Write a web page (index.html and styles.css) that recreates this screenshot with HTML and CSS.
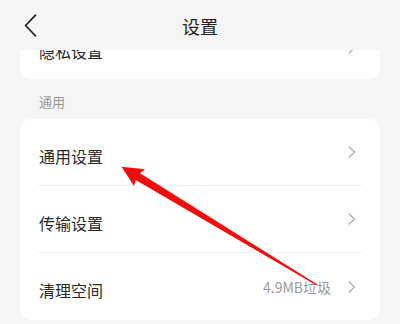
FILE: index.html
```html
<!DOCTYPE html>
<html lang="zh-CN">
<head>
<meta charset="utf-8">
<title>设置</title>
<link rel="stylesheet" href="styles.css">
</head>
<body>
<div class="page">
  <header class="topbar">
    <div class="back">
      <svg width="13" height="23" viewBox="0 0 13 23"><path d="M11.5 1.2 L1.6 11.5 L11.5 21.8" fill="none" stroke="#222" stroke-width="1.7" stroke-linecap="round" stroke-linejoin="round"/></svg>
    </div>
    <div class="title">设置</div>
    <div></div>
  </header>
  <main class="content">
    <section class="card card-top">
      <div class="row row-short">
        <span class="label">隐私设置</span>
        <span class="right"><svg class="chev" width="8" height="12" viewBox="0 0 8 12"><path d="M1.2 1 L6.4 6 L1.2 11" fill="none" stroke="#aaa" stroke-width="1.2" stroke-linecap="round" stroke-linejoin="round"/></svg></span>
      </div>
    </section>
    <div class="group-title">通用</div>
    <section class="card">
      <div class="row">
        <span class="label">通用设置</span>
        <span class="right"><svg class="chev" width="8" height="12" viewBox="0 0 8 12"><path d="M1.2 1 L6.4 6 L1.2 11" fill="none" stroke="#aaa" stroke-width="1.2" stroke-linecap="round" stroke-linejoin="round"/></svg></span>
      </div>
      <div class="row">
        <span class="label">传输设置</span>
        <span class="right"><svg class="chev" width="8" height="12" viewBox="0 0 8 12"><path d="M1.2 1 L6.4 6 L1.2 11" fill="none" stroke="#aaa" stroke-width="1.2" stroke-linecap="round" stroke-linejoin="round"/></svg></span>
      </div>
      <div class="row">
        <span class="label">清理空间</span>
        <span class="right"><span class="value">4.9MB垃圾</span><svg class="chev" width="8" height="12" viewBox="0 0 8 12"><path d="M1.2 1 L6.4 6 L1.2 11" fill="none" stroke="#aaa" stroke-width="1.2" stroke-linecap="round" stroke-linejoin="round"/></svg></span>
      </div>
    </section>
  </main>
  <svg class="annot" width="400" height="324" viewBox="0 0 400 324">
    <defs>
      <filter id="soft" x="-10%" y="-10%" width="120%" height="120%">
        <feGaussianBlur stdDeviation="0.6"/>
      </filter>
    </defs>
    <polygon filter="url(#soft)" fill="#f21010" points="121.5,166.8 145,169.2 140,173.2 317.4,284.6 316.6,285.4 135.6,180 134,186"/>
  </svg>
</div>
</body>
</html>
```
FILE: styles.css
```css
* { box-sizing: border-box; }
html, body { margin: 0; padding: 0; }
body {
  background: #f5f5f5;
  font-family: "Noto Sans CJK SC", "Noto Sans", sans-serif;
  color: #222;
}
.page {
  position: relative;
  width: 400px;
  height: 324px;
  overflow: hidden;
  display: flex;
  flex-direction: column;
}
.topbar {
  height: 50px;
  flex: none;
  display: grid;
  grid-template-columns: 1fr auto 1fr;
  align-items: center;
  background: #f5f5f5;
}
.back {
  padding-left: 24px;
  display: flex;
  align-items: center;
  padding-top: 1px;
}
.back svg { display: block; }
.title {
  font-size: 18px;
  line-height: 24px;
  color: #222;
  padding-top: 1px;
}
.content {
  flex: 1;
  overflow: hidden;
  padding: 0 20px;
}
.card {
  background: #fff;
  border-radius: 10px;
}
.card-top {
  margin-top: -34px;
}
.row {
  height: 67px;
  margin: 0 18px;
  padding: 0 6px 0 1px;
  display: flex;
  align-items: center;
  justify-content: space-between;
  border-bottom: 1px solid #efefef;
}
.row:last-child { border-bottom: none; }
.row-short { height: 63px; }
.label {
  font-size: 16px;
  line-height: 22px;
  color: #2a2a2a;
  margin-top: 7px;
}
.right {
  display: flex;
  align-items: center;
  gap: 17px;
}
.value {
  font-size: 14px;
  line-height: 20px;
  color: #9a9a9a;
  margin-top: 1px;
}
.chev { display: block; }
.group-title {
  font-size: 13px;
  line-height: 20px;
  color: #999;
  padding: 13px 0 7px 19px;
}
.annot {
  position: absolute;
  left: 0;
  top: 0;
  pointer-events: none;
}
```
